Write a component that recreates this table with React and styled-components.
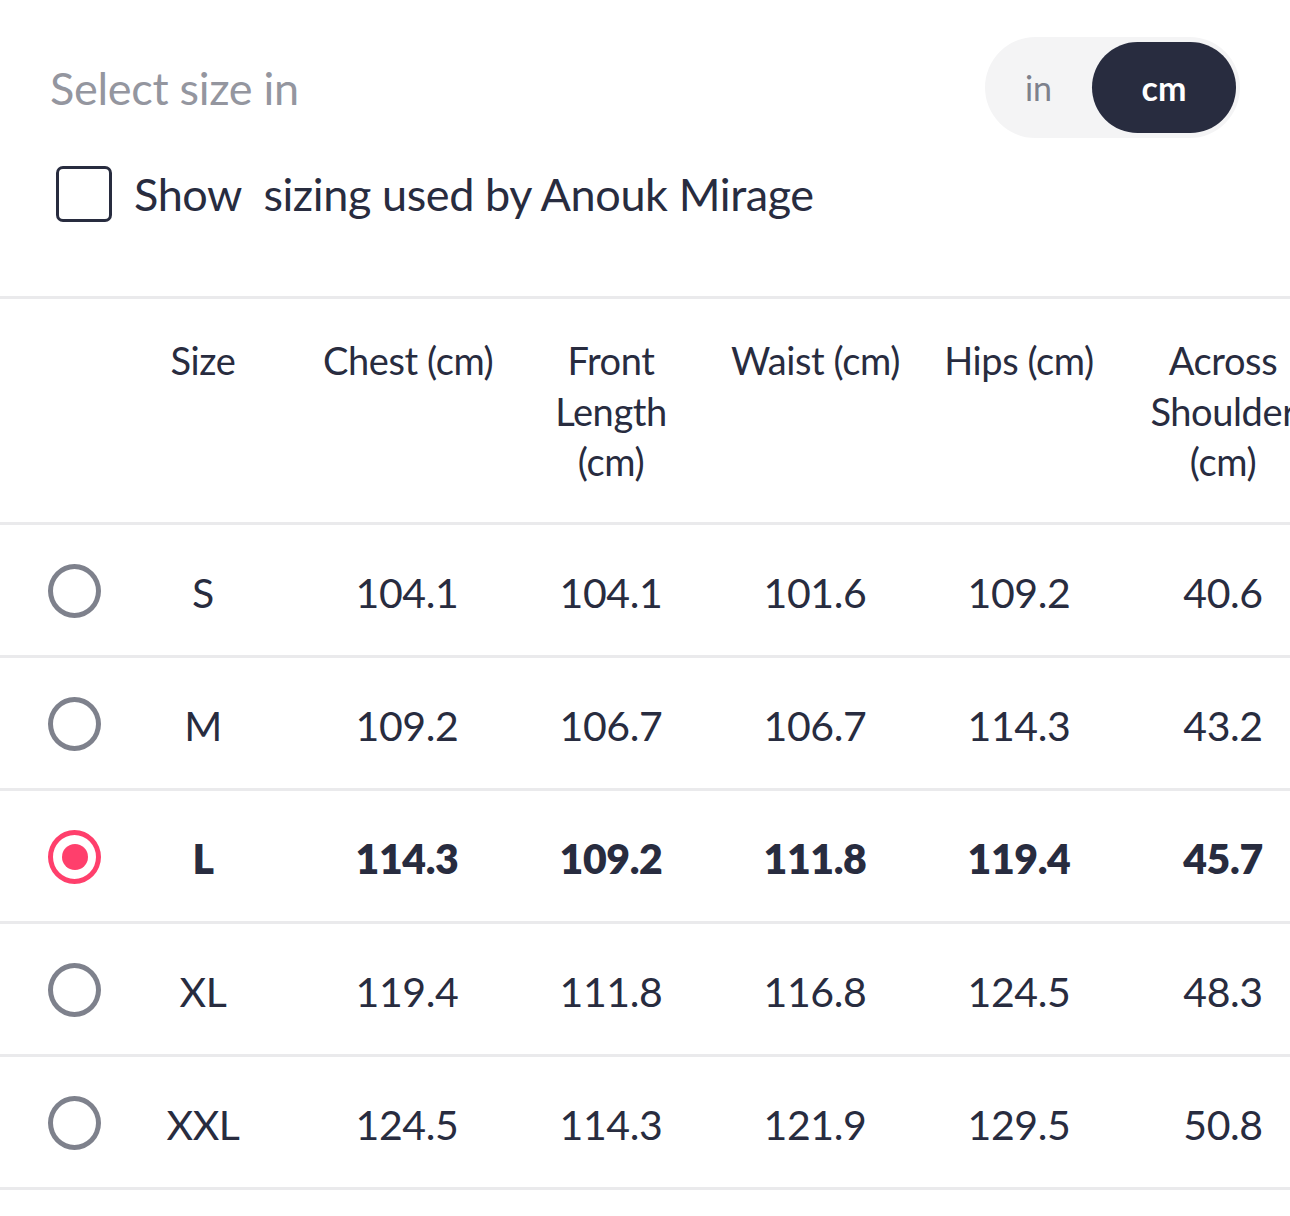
import React from "react";
import styled, { createGlobalStyle } from "styled-components";

const Global = createGlobalStyle`
  html, body { margin: 0; padding: 0; background: #fff; overflow: hidden; }
  body { font-family: "Lato", "Noto Sans", sans-serif; color: #282c3f; }
`;

const Page = styled.div`
  width: 1290px;
  height: 1216px;
  overflow: hidden;
  background: #fff;
`;

const TopBar = styled.div`
  display: flex;
  align-items: center;
  justify-content: space-between;
  padding: 37px 50px 0 50px;
`;

const Title = styled.div`
  font-size: 45px;
  color: #94969f;
  letter-spacing: -0.3px;
`;

const Toggle = styled.div`
  display: flex;
  align-items: center;
  width: 255px;
  height: 101px;
  box-sizing: border-box;
  padding: 5px 4px 5px 0;
  border-radius: 51px;
  background: #f4f4f5;
`;

const ToggleOption = styled.div`
  height: 100%;
  width: ${(p) => (p.$active ? "144px" : "107px")};
  display: flex;
  align-items: center;
  justify-content: center;
  border-radius: 46px;
  font-size: 34px;
  font-weight: ${(p) => (p.$active ? 700 : 400)};
  color: ${(p) => (p.$active ? "#fff" : "#7e818c")};
  background: ${(p) => (p.$active ? "#282c3f" : "transparent")};
`;

const CheckRow = styled.label`
  display: flex;
  align-items: center;
  gap: 22px;
  padding: 28px 0 0 56px;
`;

const Box = styled.span`
  width: 56px;
  height: 56px;
  box-sizing: border-box;
  border: 3px solid #282c3f;
  border-radius: 7px;
`;

const CheckText = styled.span`
  font-size: 45px;
  white-space: pre;
  letter-spacing: -0.4px;
`;

const Table = styled.div`
  margin-top: 74px;
  border-top: 3px solid #eaeaec;
  width: 1290px;
  overflow: hidden;
`;

const Row = styled.div`
  display: grid;
  grid-template-columns: 101px repeat(6, 204px);
  width: 1325px;
  align-items: ${(p) => (p.$head ? "start" : "center")};
  height: ${(p) => (p.$head ? "223px" : "130px")};
  border-bottom: 3px solid #eaeaec;
  box-sizing: content-box;
`;

const HeadCell = styled.div`
  padding: 36px 18px 0 18px;
  text-align: center;
  font-size: 38px;
  line-height: 50.5px;
  letter-spacing: -0.4px;
  white-space: ${(p) => (p.$nowrap ? "nowrap" : "normal")};
`;

const Cell = styled.div`
  padding-top: 4px;
  text-align: center;
  font-size: 41px;
  font-weight: ${(p) => (p.$bold ? 800 : 400)};
  letter-spacing: -0.4px;
`;

const RadioCell = styled.div`
  display: flex;
  align-items: center;
  padding-left: 48px;
  padding-top: 2px;
`;

const Radio = styled.span`
  width: 54px;
  height: 54px;
  box-sizing: border-box;
  border-radius: 50%;
  border: 5px solid ${(p) => (p.$on ? "#ff3f6c" : "#7e818c")};
  display: flex;
  align-items: center;
  justify-content: center;
  &::after {
    content: "";
    width: 26px;
    height: 26px;
    border-radius: 50%;
    background: #ff3f6c;
    display: ${(p) => (p.$on ? "block" : "none")};
  }
`;

const headers = [
  "Size",
  "Chest (cm)",
  "Front Length (cm)",
  "Waist (cm)",
  "Hips (cm)",
  "Across Shoulder (cm)",
];

const rows = [
  ["S", "104.1", "104.1", "101.6", "109.2", "40.6"],
  ["M", "109.2", "106.7", "106.7", "114.3", "43.2"],
  ["L", "114.3", "109.2", "111.8", "119.4", "45.7"],
  ["XL", "119.4", "111.8", "116.8", "124.5", "48.3"],
  ["XXL", "124.5", "114.3", "121.9", "129.5", "50.8"],
];

export default function App() {
  return (
    <Page>
      <Global />
      <TopBar>
        <Title>Select size in</Title>
        <Toggle>
          <ToggleOption>in</ToggleOption>
          <ToggleOption $active>cm</ToggleOption>
        </Toggle>
      </TopBar>
      <CheckRow>
        <Box />
        <CheckText>{"Show  sizing used by Anouk Mirage"}</CheckText>
      </CheckRow>
      <Table>
        <Row $head>
          <div />
          {headers.map((h, i) => (
            <HeadCell key={h} $nowrap={i === 1 || i === 3 || i === 4}>
              {h}
            </HeadCell>
          ))}
        </Row>
        {rows.map((r) => {
          const on = r[0] === "L";
          return (
            <Row key={r[0]}>
              <RadioCell>
                <Radio $on={on} />
              </RadioCell>
              {r.map((v, i) => (
                <Cell key={i} $bold={on}>
                  {v}
                </Cell>
              ))}
            </Row>
          );
        })}
      </Table>
    </Page>
  );
}
